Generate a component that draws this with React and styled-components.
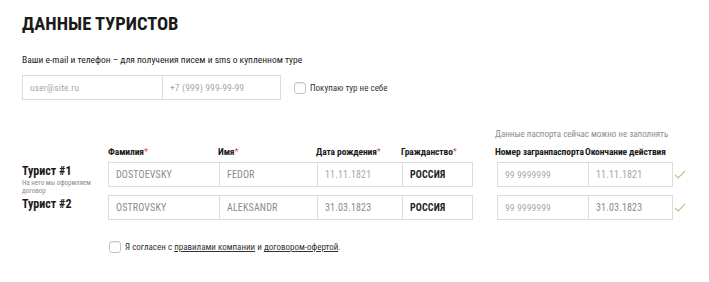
import React from 'react'
import styled, { createGlobalStyle } from 'styled-components'

const GlobalStyle = createGlobalStyle`
    body {
        margin: 0;
        background: #fff;
        font-family: "Roboto Condensed", "Liberation Sans Narrow", "DejaVu Sans Condensed", Roboto, sans-serif;
        color: #222;
    }
`

const StyledPage = styled.div`
    width: 709px;
    height: 282px;
    padding: 14px 22px 0;
    box-sizing: border-box;
`

const StyledTitle = styled.h1`
    margin: 0;
    font-size: 18.5px;
    line-height: 20px;
    font-weight: 700;
    color: #1a1a1a;
`

const StyledSubtitle = styled.p`
    margin: 20px 0 0;
    font-size: 9.5px;
    line-height: 12px;
    color: #222;
`

const StyledContactRow = styled.div`
    display: flex;
    align-items: center;
    margin-top: 9px;
`

const StyledInputGroup = styled.div`
    display: flex;
    height: 25px;
    border: 1px solid #dcdcdc;
    box-sizing: border-box;
`

const StyledCell = styled.div`
    width: ${(props) => props.width}px;
    box-sizing: border-box;
    display: flex;
    align-items: center;
    padding-left: 7px;
    font-size: ${(props) => (props.small ? '9.5px' : '10px')};
    font-weight: ${(props) => (props.bold ? 700 : 400)};
    color: ${(props) => props.color || '#8c8c8c'};
    letter-spacing: 0.15px;
    white-space: nowrap;
    & + & {
        border-left: 1px solid #dcdcdc;
    }
`

const StyledCheckbox = styled.span`
    width: 12px;
    height: 12px;
    box-sizing: border-box;
    border: 1px solid #c4c4c4;
    border-radius: 3px;
    box-shadow: inset 0 1px 1px rgba(0, 0, 0, 0.08);
    flex-shrink: 0;
`

const StyledCheckLabel = styled.label`
    display: flex;
    align-items: center;
    gap: 4px;
    margin-left: ${(props) => props.offset || 0}px;
    font-size: 9px;
    color: #333;
`

const StyledTable = styled.div`
    margin-top: 29px;
    display: flex;
    flex-direction: column;
`

const StyledRow = styled.div`
    display: flex;
    align-items: ${(props) => (props.head ? 'flex-end' : 'flex-start')};
`

const StyledLabelCol = styled.div`
    width: 86px;
    flex-shrink: 0;
`

const StyledTouristName = styled.div`
    font-size: 12px;
    line-height: 14px;
    font-weight: 700;
    color: #1a1a1a;
    margin-top: 2px;
`

const StyledTouristNote = styled.div`
    font-size: 7px;
    line-height: 8px;
    color: #8c8c8c;
    margin-top: 1px;
`

const StyledHeadCell = styled.div`
    width: ${(props) => props.width}px;
    font-size: 9.5px;
    line-height: 12px;
    font-weight: 700;
    color: #1a1a1a;
    padding-bottom: 4px;
    white-space: nowrap;
    letter-spacing: -0.1px;

    em {
        font-style: normal;
        color: #e8543e;
        font-weight: 400;
    }
`

const StyledPassportHead = styled.div`
    display: flex;
    flex-direction: column;
`

const StyledPassportNote = styled.div`
    font-size: 9px;
    line-height: 11px;
    color: #8c8c8c;
    margin-bottom: 6px;
    white-space: nowrap;
`

const StyledSpacer = styled.div`
    width: 24px;
    flex-shrink: 0;
`

const StyledCheckMark = styled.div`
    width: 20px;
    height: 24px;
    display: flex;
    align-items: center;
    justify-content: center;
`

const StyledAgreement = styled.div`
    margin: 21px 0 0 87px;
`

const StyledLink = styled.a`
    color: #333;
    text-decoration: underline;
`

const mainCols = [
    { key: 'last', title: 'Фамилия', width: 110 },
    { key: 'first', title: 'Имя', width: 98 },
    { key: 'birth', title: 'Дата рождения', width: 85 },
    { key: 'country', title: 'Гражданство', width: 70 },
]

const passportCols = [
    { key: 'number', title: 'Номер загранпаспорта', width: 90 },
    { key: 'expires', title: 'Окончание действия', width: 84 },
]

const tourists = [
    {
        id: 1,
        name: 'Турист #1',
        note: 'На него мы оформляем договор',
        last: 'DOSTOEVSKY',
        first: 'FEDOR',
        birth: '11.11.1821',
        country: 'РОССИЯ',
        number: '99 9999999',
        expires: '11.11.1821',
        dim: true,
    },
    {
        id: 2,
        name: 'Турист #2',
        last: 'OSTROVSKY',
        first: 'ALEKSANDR',
        birth: '31.03.1823',
        country: 'РОССИЯ',
        number: '99 9999999',
        expires: '31.03.1823',
    },
]

const Check = () => (
    <StyledCheckMark>
        <svg width="12" height="9" viewBox="0 0 12 9">
            <path d="M1 5 L4.2 8 L11 1" fill="none" stroke="#a9cf84" strokeWidth="1.1" />
        </svg>
    </StyledCheckMark>
)

const TouristRow = ({ tourist }) => (
    <StyledRow>
        <StyledLabelCol>
            <StyledTouristName>{tourist.name}</StyledTouristName>
            {tourist.note && <StyledTouristNote>{tourist.note}</StyledTouristNote>}
        </StyledLabelCol>
        <StyledInputGroup>
            <StyledCell width={110}>{tourist.last}</StyledCell>
            <StyledCell width={98}>{tourist.first}</StyledCell>
            <StyledCell width={85} color={tourist.dim ? '#a8a8a8' : '#8a8a8a'}>{tourist.birth}</StyledCell>
            <StyledCell width={70} color="#222" bold>{tourist.country}</StyledCell>
        </StyledInputGroup>
        <StyledSpacer />
        <StyledInputGroup>
            <StyledCell width={90} color="#a8a8a8" small>{tourist.number}</StyledCell>
            <StyledCell width={84} color={tourist.dim ? '#a8a8a8' : '#8a8a8a'}>{tourist.expires}</StyledCell>
        </StyledInputGroup>
        <Check />
    </StyledRow>
)

const App = () => {
    return (
        <StyledPage>
            <GlobalStyle />
            <StyledTitle>ДАННЫЕ ТУРИСТОВ</StyledTitle>
            <StyledSubtitle>Ваши e-mail и телефон – для получения писем и sms о купленном туре</StyledSubtitle>

            <StyledContactRow>
                <StyledInputGroup>
                    <StyledCell width={139} color="#a8a8a8" small>user@site.ru</StyledCell>
                    <StyledCell width={118} color="#a8a8a8" small>+7 (999) 999-99-99</StyledCell>
                </StyledInputGroup>
                <StyledCheckLabel offset={13}>
                    <StyledCheckbox />
                    Покупаю тур не себе
                </StyledCheckLabel>
            </StyledContactRow>

            <StyledTable>
                <StyledRow head>
                    <StyledLabelCol />
                    {mainCols.map((col) => (
                        <StyledHeadCell key={col.key} width={col.width}>
                            {col.title}<em>*</em>
                        </StyledHeadCell>
                    ))}
                    <StyledSpacer />
                    <StyledPassportHead>
                        <StyledPassportNote>Данные паспорта сейчас можно не заполнять</StyledPassportNote>
                        <StyledRow>
                            {passportCols.map((col) => (
                                <StyledHeadCell key={col.key} width={col.width}>{col.title}</StyledHeadCell>
                            ))}
                        </StyledRow>
                    </StyledPassportHead>
                </StyledRow>
                {tourists.map((t) => (
                    <TouristRow key={t.id} tourist={t} />
                ))}
            </StyledTable>

            <StyledAgreement>
                <StyledCheckLabel>
                    <StyledCheckbox />
                    <span>
                        Я согласен с <StyledLink>правилами компании</StyledLink> и <StyledLink>договором-офертой</StyledLink>.
                    </span>
                </StyledCheckLabel>
            </StyledAgreement>
        </StyledPage>
    )
}

export default App
